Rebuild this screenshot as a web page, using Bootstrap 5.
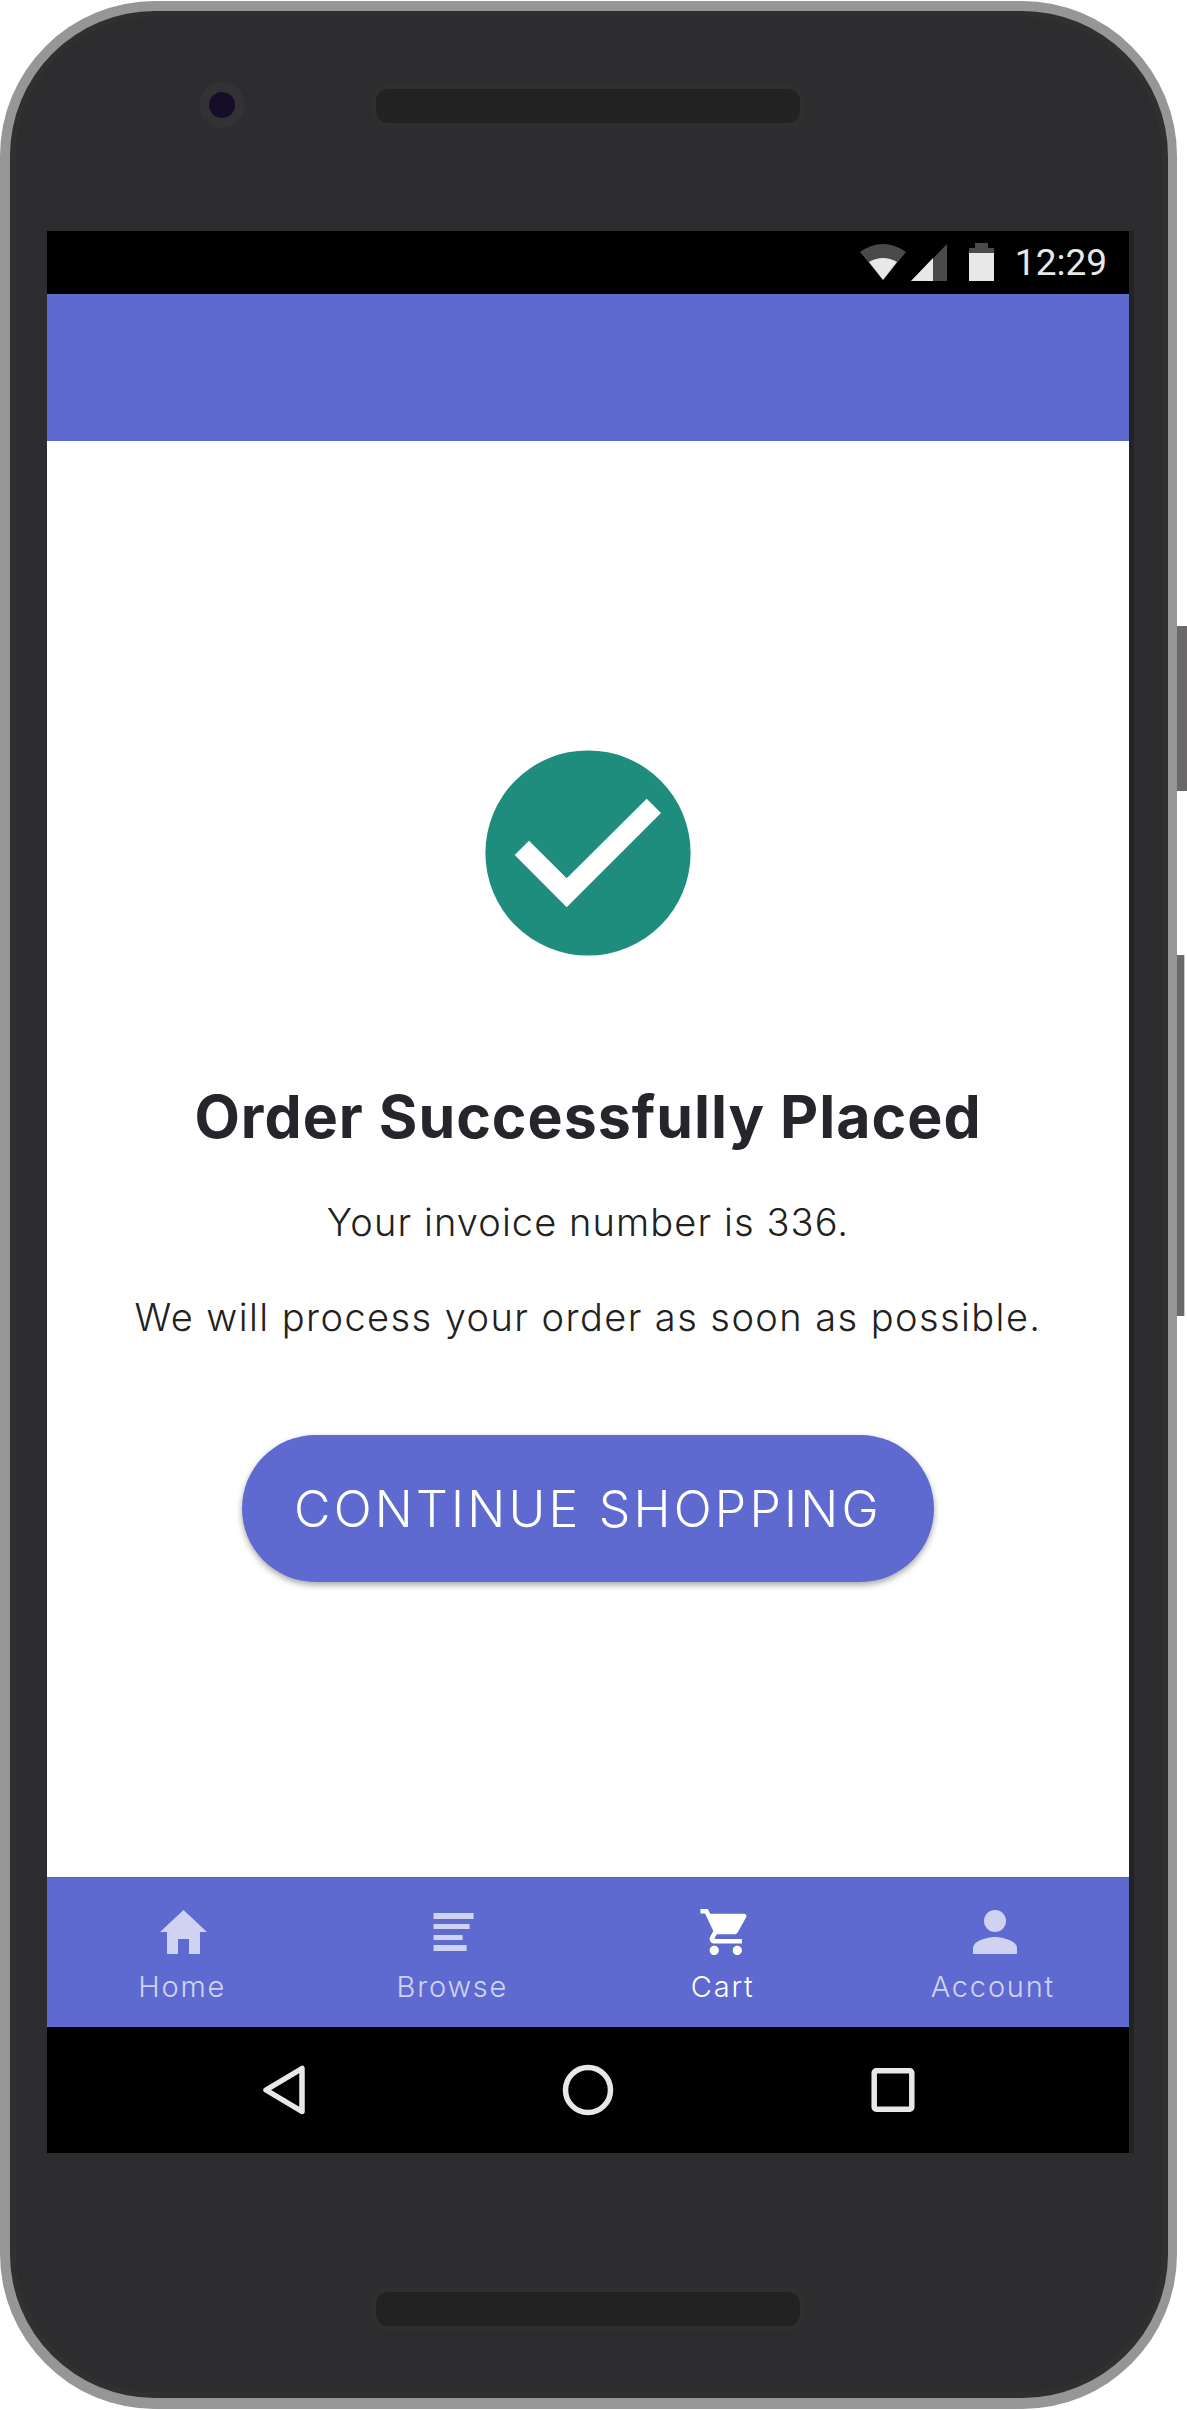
<!DOCTYPE html>
<html>
<head>
  <title>Order placed</title>
  <link href="https://cdn.jsdelivr.net/npm/bootstrap@5.3.0/dist/css/bootstrap.min.css" rel="stylesheet" />
  <style>
    body { background: #fff; font-family: "Inter", "Open Sans", sans-serif; margin: 0; }
    .device { position: relative; width: 1177px; height: 2408px; margin-top: 1px; background: #2d2c2e; border: solid #969696; border-width: 10px 9px 11px 10px; border-radius: 155px; box-shadow: inset 0 0 0 6px #2f302f; }
    .bezel-top { height: 220px; padding-left: 189px; padding-top: 71px; }
    .bezel-bottom { height: 245px; padding-top: 134px; }
    .cam { width: 46px; height: 46px; border-radius: 50%; background: #323133; }
    .cam-lens { width: 26px; height: 26px; border-radius: 50%; background: #160d28; }
    .speaker { width: 434px; height: 44px; background: #232223; border: 5px solid #302f30; border-radius: 17px; }
    .bezel-top .speaker { margin-left: 126px; margin-top: 2px; }
    .bezel-bottom .speaker { margin-left: 361px; }
    .screen { width: 1082px; height: 1922px; margin-left: 37px; background: #fff; box-shadow: 5px 0 0 #232323; }
    .status-strip { height: 63px; background: #000; padding-right: 22px; }
    .clock { font-family: "Roboto", sans-serif; font-size: 37px; line-height: 63px; color: #e8e8e8; margin-left: 21px; }
    .app-bar { height: 147px; background: #5f6ad1; }
    .order-main { flex: 1 1 auto; padding-top: 309px; }
    .order-title { font-size: 59px; font-weight: 700; line-height: 76px; letter-spacing: 1px; color: #25262b; margin: 123px 0 0; }
    .order-text { font-size: 38px; font-weight: 300; line-height: 48px; color: #212121; margin: 0; }
    .order-text-first { margin-top: 43px; letter-spacing: 1.100px; }
    .order-text-second { margin-top: 47px; letter-spacing: 1.430px; }
    .continue-btn { width: 692px; height: 147px; margin-top: 94px; padding-top: 8px; background: #5f6ad1; border: 0; color: #fff; font-size: 50px; font-weight: 300; letter-spacing: 3.200px; box-shadow: 0 3px 6px rgba(0,0,0,.35); }
    .tab-strip { height: 150px; background: #5f6ad1; border-top: 1px solid #5763cc; padding: 0 1px 0 0; }
    .tab-item { flex: 1 1 0; color: #cfd2f1; font-size: 29px; font-weight: 300; line-height: 36px; padding-top: 29px; letter-spacing: 1.800px; }
    .tab-item.is-active { color: #fff; }
    .tab-icon { display: block; width: 60px; height: 50px; margin-bottom: 12px; }
    .nav-strip { height: 126px; background: #000; }
    .side-key { position: absolute; left: 1167px; background: #6a6868; }
    .key-a { top: 615px; width: 10px; height: 165px; }
    .key-b { top: 944px; width: 7px; height: 361px; box-shadow: 1px 0 0 #ccc; }
  </style>
</head>
<body>
  <div class="device d-flex flex-column">
    <div class="side-key key-a"></div>
    <div class="side-key key-b"></div>

    <div class="bezel-top d-flex">
      <div class="cam d-flex align-items-center justify-content-center"><div class="cam-lens"></div></div>
      <div class="speaker"></div>
    </div>

    <div class="screen d-flex flex-column">
      <div class="status-strip d-flex align-items-center justify-content-end">
        <svg width="134" height="63" viewBox="0 0 134 63">
          <path d="M0 21 Q23 5 46 21 L23 49z" fill="#4a4a4a" />
          <path d="M9 31 Q23 23 37 31 L23 49z" fill="#e8e8e8" />
          <path d="M87 13 V50 H51z" fill="#4a4a4a" />
          <path d="M73 27 V50 H51z" fill="#e8e8e8" />
          <path d="M115 17 V12 H128 V17 H134 V22 H109 V17z" fill="#4a4a4a" />
          <rect x="109" y="22" width="25" height="28" fill="#e8e8e8" />
        </svg>
        <span class="clock">12:29</span>
      </div>
      <div class="app-bar"></div>

      <div class="order-main d-flex flex-column align-items-center text-center">
        <svg width="206" height="206" viewBox="0 0 206 206">
          <circle cx="103" cy="103" r="102.6" fill="#1f8d7d" />
          <path d="M29.700 105 44 90.700 81.700 128.300 161.700 48.700 176 63 81.700 157.300z" fill="#fff" />
        </svg>
        <h1 class="order-title">Order Successfully Placed</h1>
        <p class="order-text order-text-first">Your invoice number is 336.</p>
        <p class="order-text order-text-second">We will process your order as soon as possible.</p>
        <button type="button" class="btn rounded-pill continue-btn">CONTINUE SHOPPING</button>
      </div>

      <div class="tab-strip d-flex">
        <div class="tab-item d-flex flex-column align-items-center">
          <svg class="tab-icon" viewBox="0 0 60 50"><path d="M31.500 3 55 25H48V47H37V32H26V47H15V25H8z" fill="#cfd2f1" /></svg>
          <span>Home</span>
        </div>
        <div class="tab-item d-flex flex-column align-items-center">
          <svg class="tab-icon" viewBox="0 0 60 50"><path d="M11.600 6H51.600V12H11.600zM11.600 17H47.600V22H11.600zM11.600 28H40.600V33H11.600zM11.600 38H44.600V44H11.600z" fill="#cfd2f1" /></svg>
          <span>Browse</span>
        </div>
        <div class="tab-item is-active d-flex flex-column align-items-center">
          <svg class="tab-icon" viewBox="-2.200 1.130 26 21.700"><path d="M7 18c-1.100 0-1.990.9-1.990 2S5.900 22 7 22s2-.9 2-2-.9-2-2-2zM1 2v2h2l3.600 7.590-1.350 2.450c-.16.28-.25.61-.25.96 0 1.100.9 2 2 2h12v-2H7.420c-.14 0-.25-.11-.25-.25l.03-.12.9-1.630h7.450c.75 0 1.410-.41 1.750-1.030l3.580-6.470c.08-.14.12-.31.12-.48 0-.55-.45-1-1-1H5.210l-.94-2H1zm16 16c-1.100 0-1.990.9-1.990 2s.89 2 1.990 2 2-.9 2-2-.9-2-2-2z" fill="#fff" /></svg>
          <span>Cart</span>
        </div>
        <div class="tab-item d-flex flex-column align-items-center">
          <svg class="tab-icon" viewBox="0 0 60 50"><circle cx="32" cy="14" r="11" fill="#cfd2f1" /><path d="M10 47V41C10 34 24 30 32 30S54 34 54 41V47z" fill="#cfd2f1" /></svg>
          <span>Account</span>
        </div>
      </div>

      <div class="nav-strip d-flex align-items-center">
        <svg width="1082" height="126" viewBox="0 0 1082 126">
          <path d="M219 63 255 41.500V84.500z" fill="none" stroke="#e8e8e8" stroke-width="5.500" stroke-linejoin="round" />
          <circle cx="541" cy="63" r="22.500" fill="none" stroke="#e8e8e8" stroke-width="5.500" />
          <rect x="827.200" y="43.750" width="37.600" height="38.500" rx="2" fill="none" stroke="#e8e8e8" stroke-width="5.500" />
        </svg>
      </div>
    </div>

    <div class="bezel-bottom">
      <div class="speaker"></div>
    </div>
  </div>

  <script src="https://cdn.jsdelivr.net/npm/bootstrap@5.3.0/dist/js/bootstrap.bundle.min.js"></script>
</body>
</html>
